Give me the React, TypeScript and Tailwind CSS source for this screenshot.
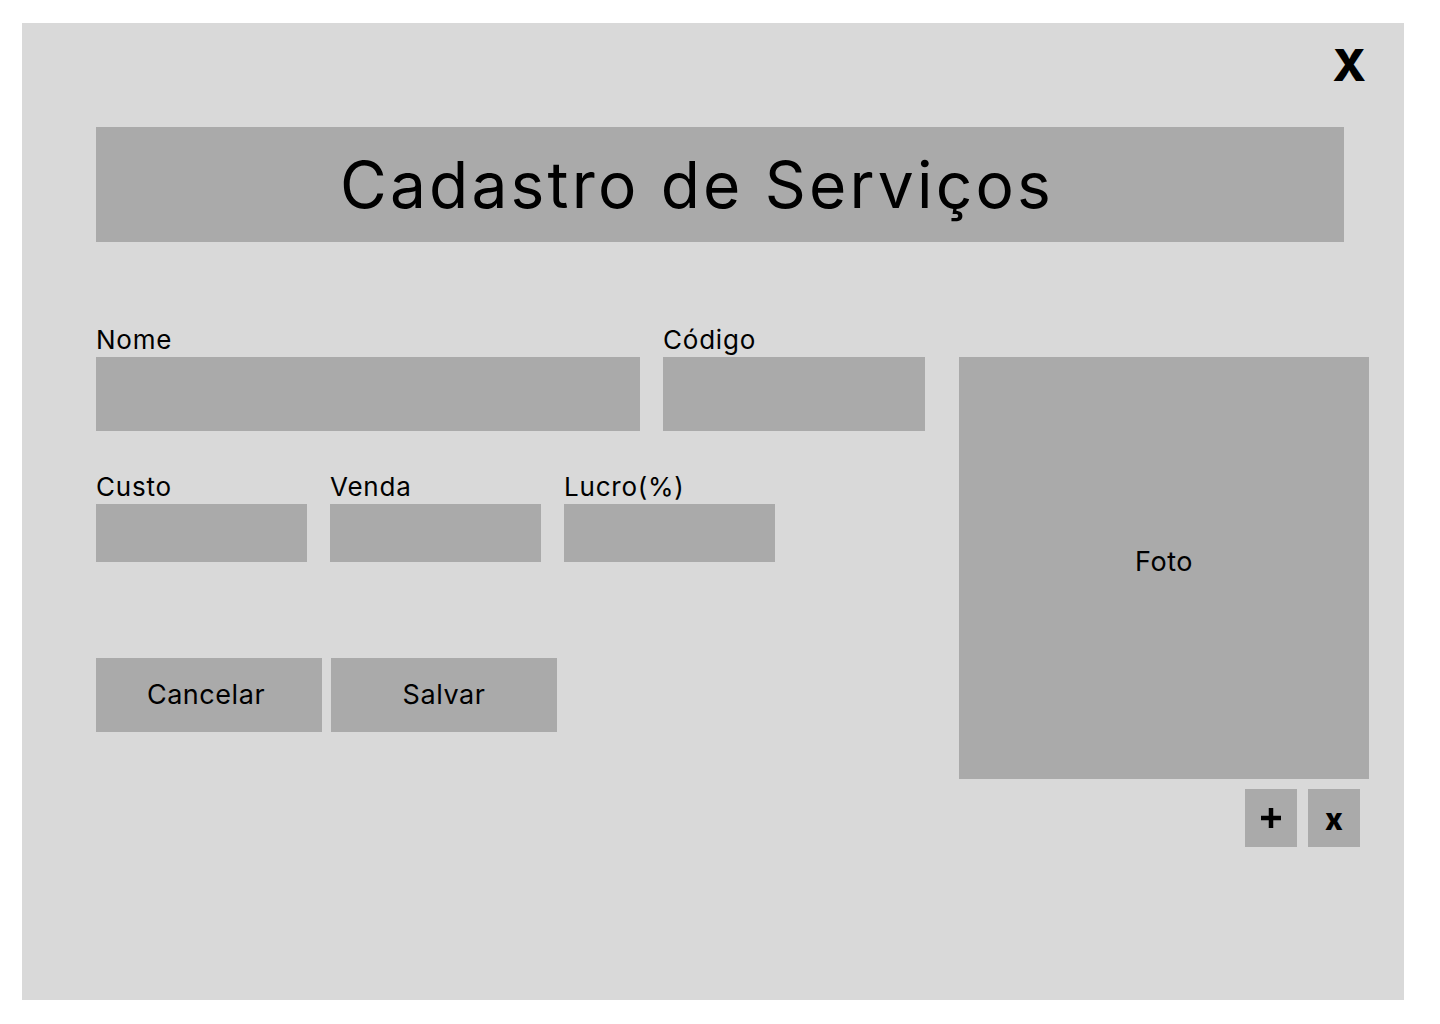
export default function App() {
  return (
    <div className="min-h-screen bg-white pl-[22px] pt-[23px] font-['Inter','Liberation_Sans',sans-serif] text-black">
      <div className="flex h-[977px] w-[1382px] flex-col bg-[#d9d9d9]">
        {/* Fechar */}
        <div className="flex h-[104px] justify-end pr-[38px] pt-[20px]">
          <span className="text-[44px] font-extrabold leading-none">X</span>
        </div>

        {/* Titulo */}
        <div className="ml-[74px] flex h-[115px] w-[1248px] items-center justify-center bg-[#aaaaaa] pr-[46px]">
          <h1 className="text-[64px] font-normal leading-none tracking-[0.05em]">Cadastro de Serviços</h1>
        </div>

        <div className="ml-[74px] mt-[82px] flex gap-[34px]">
          {/* Coluna esquerda */}
          <div className="flex flex-col">
            <div className="flex gap-[23px]">
              <Field label="Nome" width="w-[544px]" height="h-[74px]" />
              <Field label="Código" width="w-[262px]" height="h-[74px]" />
            </div>

            <div className="mt-[40px] flex gap-[23px]">
              <Field label="Custo" width="w-[211px]" height="h-[58px]" />
              <Field label="Venda" width="w-[211px]" height="h-[58px]" />
              <Field label="Lucro(%)" width="w-[211px]" height="h-[58px]" />
            </div>

            <div className="mt-[96px] flex gap-[9px]">
              <button className="flex h-[74px] w-[226px] items-center justify-center bg-[#aaaaaa] pr-[6px] text-[27px] tracking-[0.02em]">
                Cancelar
              </button>
              <button className="flex h-[74px] w-[226px] items-center justify-center bg-[#aaaaaa] text-[27px] tracking-[0.02em]">
                Salvar
              </button>
            </div>
          </div>

          {/* Foto */}
          <div className="mt-[33px] flex flex-col">
            <div className="flex h-[422px] w-[410px] items-center justify-center bg-[#aaaaaa] pb-[12px] text-[27px] tracking-[0.02em]">
              Foto
            </div>
            <div className="mt-[10px] flex justify-end gap-[11px] pr-[9px]">
              <button className="flex h-[58px] w-[52px] items-center justify-center bg-[#aaaaaa]">
                <svg width="22" height="22" viewBox="0 0 22 22">
                  <path d="M11 1v20M1 11h20" stroke="black" strokeWidth="4.5" />
                </svg>
              </button>
              <button className="flex h-[58px] w-[52px] items-center justify-center bg-[#aaaaaa] pt-[2px] text-[30px] font-extrabold leading-none">
                x
              </button>
            </div>
          </div>
        </div>
      </div>
    </div>
  );
}

function Field({ label, width, height }: { label: string; width: string; height: string }) {
  return (
    <div className="flex flex-col">
      <label className="text-[26px] leading-[31px] tracking-[0.03em]">{label}</label>
      <div className={`mt-[2px] bg-[#aaaaaa] ${width} ${height}`} />
    </div>
  );
}
